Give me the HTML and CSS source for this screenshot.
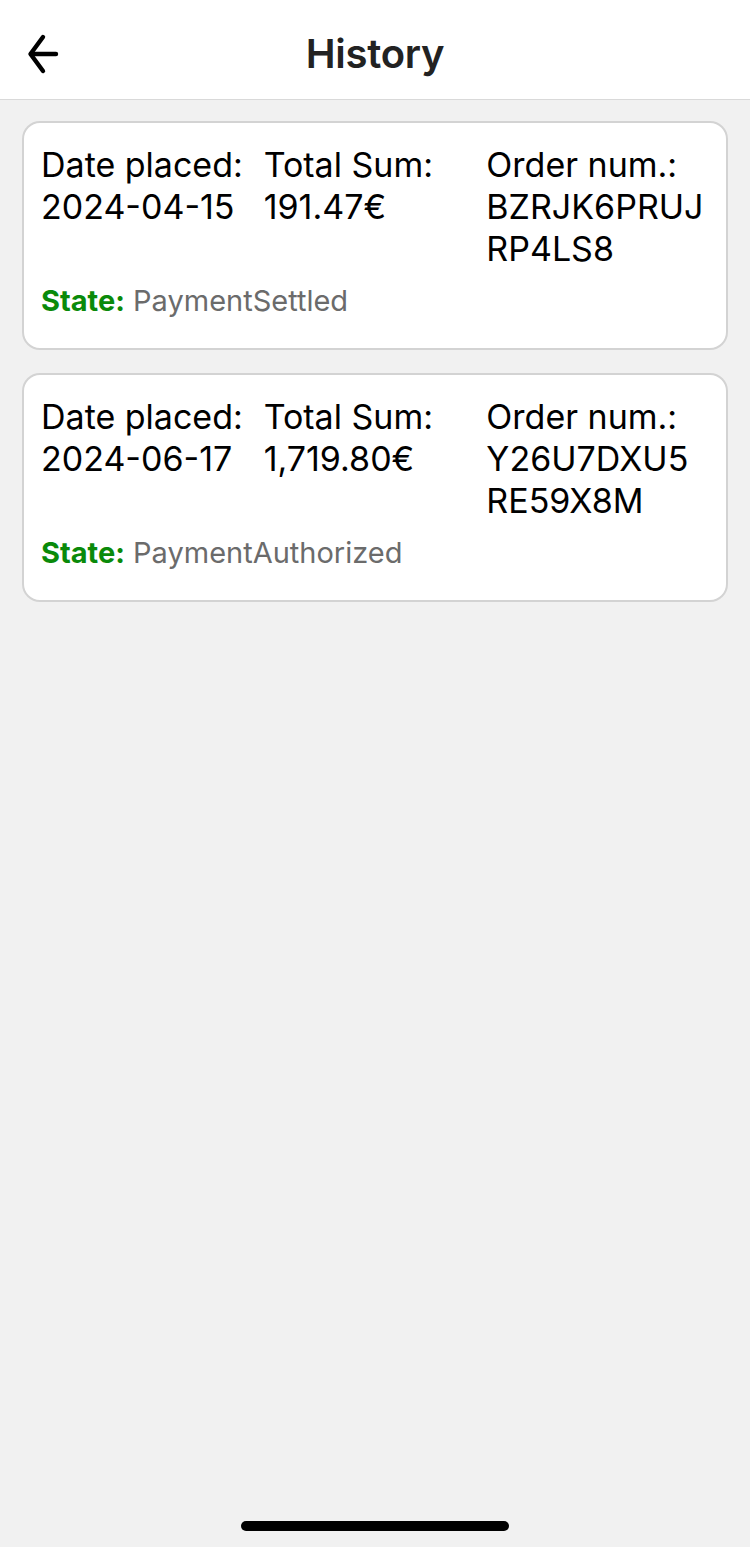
FILE: index.html
```html
<!DOCTYPE html>
<html lang="en">
<head>
<meta charset="utf-8">
<title>History</title>
<link rel="stylesheet" href="styles.css">
</head>
<body>
<div class="screen">
  <header class="topbar">
    <button class="back" aria-label="Back">
      <svg width="44" height="44" viewBox="0 0 44 44" fill="none" stroke="#000" stroke-width="4.4" stroke-linecap="round" stroke-linejoin="round">
        <path d="M8 22 H33"/>
        <path d="M20 5 L7.5 22 L20 39"/>
      </svg>
    </button>
    <h1 class="title">History</h1>
    <span class="spacer"></span>
  </header>

  <main class="list">
    <article class="card">
      <div class="cols">
        <div class="col">
          <div class="label">Date placed:</div>
          <div class="value">2024-04-15</div>
        </div>
        <div class="col">
          <div class="label">Total Sum:</div>
          <div class="value">191.47€</div>
        </div>
        <div class="col">
          <div class="label">Order num.:</div>
          <div class="value code">BZRJK6PRUJRP4LS8</div>
        </div>
      </div>
      <div class="state"><span class="state-key">State:</span> <span class="state-val">PaymentSettled</span></div>
    </article>

    <article class="card">
      <div class="cols">
        <div class="col">
          <div class="label">Date placed:</div>
          <div class="value">2024-06-17</div>
        </div>
        <div class="col">
          <div class="label">Total Sum:</div>
          <div class="value">1,719.80€</div>
        </div>
        <div class="col">
          <div class="label">Order num.:</div>
          <div class="value code">Y26U7DXU5RE59X8M</div>
        </div>
      </div>
      <div class="state"><span class="state-key">State:</span> <span class="state-val">PaymentAuthorized</span></div>
    </article>
  </main>

  <div class="home-indicator"></div>
</div>
</body>
</html>
```

FILE: styles.css
```css
* { box-sizing: border-box; }

html, body {
  margin: 0;
  padding: 0;
}

body {
  font-family: Inter, "Liberation Sans", Arial, sans-serif;
  background: #f1f1f1;
  color: #000;
}

.screen {
  position: relative;
  width: 750px;
  height: 1547px;
  background: #f1f1f1;
  overflow: hidden;
}

.topbar {
  height: 100px;
  background: #fff;
  border-bottom: 1px solid #d9d9d9;
  display: grid;
  grid-template-columns: 100px 1fr 100px;
  align-items: center;
}

.back {
  background: none;
  border: 0;
  padding: 0;
  margin-left: 23px;
  width: 44px;
  height: 44px;
  display: flex;
  align-items: center;
  justify-content: center;
  margin-top: 9px;
}

.title {
  margin: 0;
  text-align: center;
  font-size: 40px;
  font-weight: 600;
  color: #222;
  letter-spacing: -0.3px;
  padding-top: 8px;
}

.list {
  padding: 21px 22px 0;
  display: flex;
  flex-direction: column;
  gap: 23px;
}

.card {
  background: #fff;
  border: 2px solid #d3d3d3;
  border-radius: 18px;
  padding: 21px 17px 0 17px;
  height: 229px;
}

.cols {
  display: grid;
  grid-template-columns: repeat(3, 1fr);
}

.label, .value {
  font-size: 34px;
  line-height: 42px;
  color: #000;
}

.code {
  word-break: break-all;
}

.state {
  margin-top: 13px;
  font-size: 29px;
  line-height: 36px;
}

.state-key {
  color: #0a8a0a;
  font-weight: 700;
}

.state-val {
  color: #6b6b6b;
}

.home-indicator {
  position: absolute;
  left: 241px;
  top: 1521px;
  width: 268px;
  height: 10px;
  border-radius: 5px;
  background: #000;
}
```
